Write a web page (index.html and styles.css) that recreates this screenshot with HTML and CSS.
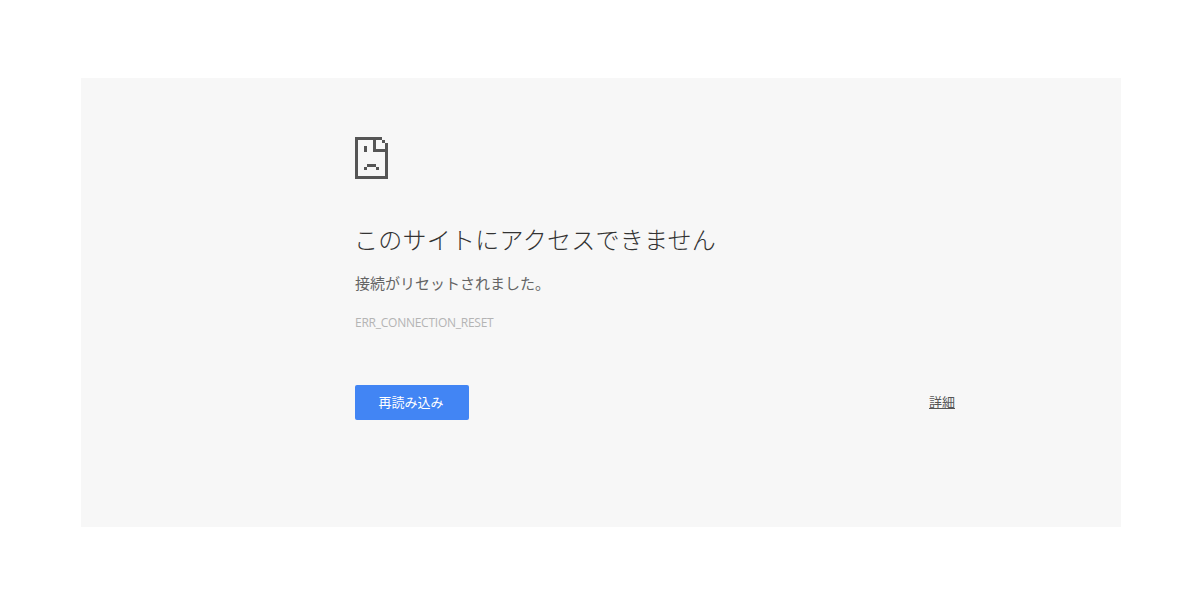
FILE: index.html
```html
<!DOCTYPE html>
<html lang="ja">
<head>
    <meta charset="UTF-8">
    <title>このサイトにアクセスできません</title>
    <link rel="stylesheet" href="styles.css">
</head>
<body>

    <div class="error-panel">
        <div class="wrapper">
            <!-- 悲しいページのアイコン -->
            <svg class="sad-icon" width="33" height="42" viewBox="0 0 33 42" shape-rendering="crispEdges" fill="#555">
                <rect x="0" y="0" width="27" height="3"/>
                <rect x="0" y="0" width="3" height="42"/>
                <rect x="0" y="39" width="33" height="3"/>
                <rect x="30" y="6" width="3" height="36"/>
                <rect x="18" y="0" width="3" height="15"/>
                <rect x="18" y="12" width="15" height="3"/>
                <rect x="27" y="3" width="3" height="3"/>
                <rect x="9" y="9" width="3" height="6"/>
                <rect x="12" y="27" width="9" height="3"/>
                <rect x="9" y="30" width="3" height="3"/>
                <rect x="21" y="30" width="3" height="3"/>
            </svg>

            <h1 class="title">このサイトにアクセスできません</h1>
            <p class="message">接続がリセットされました。</p>
            <div class="error-code">ERR_CONNECTION_RESET</div>

            <div class="actions">
                <button class="reload-button">再読み込み</button>
                <a class="details-link" href="#">詳細</a>
            </div>
        </div>
    </div>

</body>
</html>
```

FILE: styles.css
```css
html, body {
    margin: 0;
    padding: 0;
    background-color: #fff;
}

body {
    height: 600px;
    padding: 78px 79px 73px 81px;
    box-sizing: border-box;
    overflow: hidden;
    font-family: "Noto Sans CJK JP", "Open Sans", sans-serif;
}

/* グレーの背景 */
.error-panel {
    height: 449px;
    padding-left: 274px;
    background-color: #f7f7f7;
    display: flex;
}

.wrapper {
    width: 600px;
    padding-top: 59px;
}

.sad-icon {
    display: block;
}

.title {
    margin: 42px 0 0 -1px;
    font-size: 24px;
    font-weight: 300;
    line-height: 36px;
    letter-spacing: 0.27px;
    color: #333;
}

.message {
    margin: 14px 0 0;
    font-size: 15px;
    line-height: 24px;
    color: #646464;
}

.error-code {
    margin-top: 20px;
    font-family: "Open Sans", sans-serif;
    font-size: 12px;
    line-height: 16px;
    letter-spacing: -0.25px;
    color: #b4b4b4;
}

/* ボタンとリンク */
.actions {
    margin-top: 54px;
    display: flex;
    justify-content: space-between;
    align-items: center;
}

.reload-button {
    width: 114px;
    height: 35px;
    padding: 0 2px 2px 0;
    border: none;
    border-radius: 2px;
    background-color: #4285f4;
    color: #fff;
    font-family: inherit;
    font-size: 13px;
}

.details-link {
    margin-bottom: 2px;
    font-size: 13px;
    color: #555;
    text-decoration: underline;
}
```
